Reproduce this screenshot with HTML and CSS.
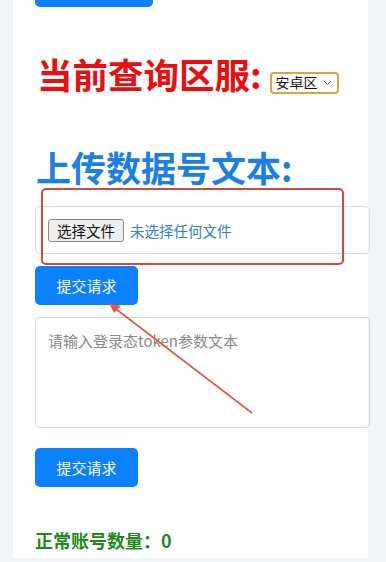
FILE: index.html
```html
<!DOCTYPE html>
<html lang="zh">
<head>
<meta charset="utf-8">
<link rel="stylesheet" href="styles.css">
</head>
<body>
<div class="page">
  <div class="card">
    <div class="btn btn-top"></div>
    <h2 class="title-red">当前查询区服:<span class="select">安卓区<svg class="chev" width="9" height="6" viewBox="0 0 9 6"><path d="M1 1 L4.5 4.5 L8 1" fill="none" stroke="#555" stroke-width="1"/></svg></span></h2>
    <h2 class="title-blue">上传数据号文本:</h2>
    <div class="filebox">
      <span class="filebtn">选择文件</span>
      <span class="filetext">未选择任何文件</span>
    </div>
    <button class="btn">提交请求</button>
    <div class="textarea"><span class="placeholder">请输入登录态token参数文本</span></div>
    <button class="btn btn-second">提交请求</button>
    <p class="count">正常账号数量：0</p>
  </div>
</div>
<div class="mark-rect"></div>
<svg class="mark-arrow" width="386" height="562" viewBox="0 0 386 562">
  <line x1="252" y1="413" x2="112" y2="306" stroke="#e05a45" stroke-width="1.6"/>
  <path d="M109 303 L121 306 L114 313 Z" fill="#e05a45"/>
</svg>
</body>
</html>
```
FILE: styles.css
```css
* { box-sizing: border-box; }
html, body { margin: 0; padding: 0; }
body {
  background: #f1f3f6;
  width: 386px;
  height: 562px;
  overflow: hidden;
  font-family: "Noto Sans CJK SC", "Noto Sans", sans-serif;
  position: relative;
}
.page {
  padding-left: 13px;
}
.card {
  width: 355px;
  height: 558px;
  background: #ffffff;
  padding: 0 0 0 22px;
  display: flex;
  flex-direction: column;
  align-items: flex-start;
}
.btn {
  display: flex;
  align-items: center;
  justify-content: center;
  width: 103px;
  height: 39px;
  border: none;
  border-radius: 5px;
  background: #0b82fb;
  color: #ffffff;
  font-family: "Noto Sans CJK SC", sans-serif;
  font-size: 15px;
  padding: 0;
  flex-shrink: 0;
}
.btn-top {
  width: 118px;
  margin-top: -32px;
  height: 39px;
}
.title-red {
  margin: 45px 0 0 2px;
  font-size: 35.5px;
  line-height: 44px;
  font-weight: 700;
  color: #ee0d0d;
  white-space: nowrap;
}
.select {
  display: inline-flex;
  align-items: center;
  height: 22px;
  width: 69px;
  margin-left: 8px;
  padding: 0 0 0 4px;
  border: 2px solid #d8a63e;
  border-radius: 4px;
  font-size: 14px;
  font-weight: 400;
  color: #111;
  line-height: 17px;
  vertical-align: 1px;
}
.chev { margin-left: 5px; }
.title-blue {
  margin: 49px 0 0 1px;
  font-size: 35px;
  line-height: 44px;
  font-weight: 700;
  color: #1c7fe4;
  white-space: nowrap;
}
.filebox {
  margin-top: 17px;
  width: 335px;
  height: 48px;
  border: 1px solid #dcdcdc;
  border-radius: 5px;
  display: flex;
  align-items: center;
  padding-left: 12px;
  flex-shrink: 0;
}
.filebtn {
  display: inline-flex;
  align-items: center;
  justify-content: center;
  width: 76px;
  height: 23px;
  background: #efefef;
  border: 1px solid #8a8a8a;
  border-radius: 3px;
  font-size: 14.5px;
  color: #111;
}
.filetext {
  margin-left: 6px;
  font-size: 14.5px;
  color: #2f80d0;
}
.filebox + .btn { margin-top: 12px; }
.textarea {
  margin-top: 12px;
  width: 335px;
  height: 111px;
  border: 1px solid #d6d6d6;
  border-radius: 5px;
  padding: 10px 12px;
  flex-shrink: 0;
}
.placeholder {
  font-size: 15px;
  color: #8a8a8a;
  line-height: 20px;
}
.btn-second { margin-top: 20px; }
.count {
  margin: 41px 0 0 0;
  font-size: 18px;
  line-height: 24px;
  font-weight: 700;
  color: #1c8a1c;
}
.mark-rect {
  position: absolute;
  left: 41px;
  top: 188px;
  width: 303px;
  height: 77px;
  border: 2px solid #d5493a;
  border-radius: 5px;
}
.mark-arrow {
  position: absolute;
  left: 0;
  top: 0;
}
```
